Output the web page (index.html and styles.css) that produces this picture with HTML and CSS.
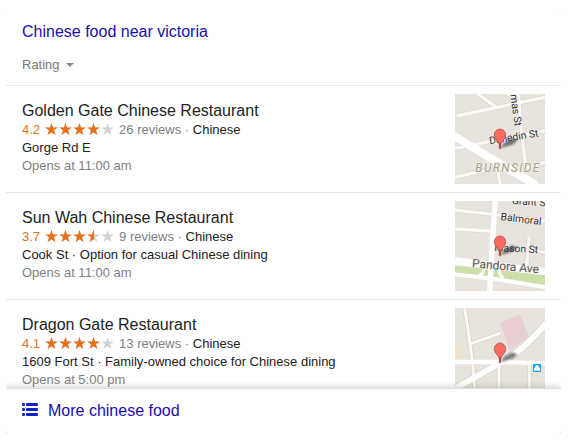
FILE: index.html
```
<!DOCTYPE html>
<html lang="en">
<head>
    <meta charset="UTF-8">
    <meta name="viewport" content="width=device-width, initial-scale=1.0">
    <title>Chinese food near victoria</title>
    <link rel="stylesheet" href="styles.css">
</head>
<body>
    <!-- shared shapes -->
    <svg class="defs" width="0" height="0" aria-hidden="true">
        <defs>
            <path id="star" d="M6.500 0L8 4.400H12.800L9 7.200L10.400 12L6.500 9.200L2.600 12L4 7.200L0.200 4.400H5Z"/>
            <g id="stars">
                <use href="#star"/>
                <use href="#star" x="14"/>
                <use href="#star" x="28"/>
                <use href="#star" x="42"/>
                <use href="#star" x="56"/>
            </g>
            <clipPath id="four"><rect width="55" height="13"/></clipPath>
            <clipPath id="three-half"><rect width="49" height="13"/></clipPath>
            <filter id="soft" x="-50%" y="-50%" width="200%" height="200%"><feGaussianBlur stdDeviation="3"/></filter>
            <g id="pin">
                <path d="M135 162L150 145L172 133L188 140L172 152L150 158Z" fill="#333" opacity=".65" filter="url(#soft)"/>
                <path d="M133 164V151C130 141 118 136 118 122A17 17 0 0 1 152 122C152 136 140 141 137 151V164Z" fill="#fa6c62" stroke="#a8433d" stroke-width="2"/>
                <path d="M135 163V146" stroke="#a8433d" stroke-width="4"/>
            </g>
        </defs>
    </svg>

    <div class="card">
        <div class="header">
            <h2><a href="#">Chinese food near victoria</a></h2>
            <button type="button" class="filter">Rating <span class="arrow"></span></button>
        </div>

        <div class="list">
            <div class="item">
                <div class="info">
                    <h3>Golden Gate Chinese Restaurant</h3>
                    <div class="rating">
                        <span class="score">4.2</span>
                        <svg class="stars" viewBox="0 0 69 14" role="img" aria-label="4.2 stars">
                            <use href="#stars" fill="#d3d3d3"/>
                            <use href="#stars" fill="#e7711b" clip-path="url(#four)"/>
                        </svg>
                        <span>26 reviews · <span class="dark">Chinese</span></span>
                    </div>
                    <p class="dark">Gorge Rd E</p>
                    <p>Opens at 11:00 am</p>
                </div>
                <svg class="map" viewBox="0 0 270 270" aria-hidden="true">
                    <rect width="270" height="270" fill="#e8e4dd"/>
                    <g fill="none" stroke="#d8d3ca" stroke-width="14">
                        <path d="M5 66L270 10M0 163L270 110M0 250L95 228M215 222L270 204M62 -4L122 38M152 -4L198 24M190 -4L199 110L211 210M128 228L136 272"/>
                    </g>
                    <g fill="none" stroke="#faf9f6" stroke-width="10">
                        <path d="M5 66L270 10M0 163L270 110M0 250L95 228M215 222L270 204M62 -4L122 38M152 -4L198 24M190 -4L199 110L211 210M128 228L136 272"/>
                    </g>
                    <path d="M-5 124L125 204L245 274" fill="none" stroke="#fff" stroke-width="24"/>
                    <g class="map-text">
                        <text x="104" y="151" transform="rotate(-9 104 151)">Dunedin St</text>
                        <text x="166" y="2" transform="rotate(82 166 2)">mas St</text>
                        <text class="area" x="61" y="233">BURNSIDE</text>
                    </g>
                    <use href="#pin"/>
                </svg>
            </div>

            <div class="item">
                <div class="info">
                    <h3>Sun Wah Chinese Restaurant</h3>
                    <div class="rating">
                        <span class="score">3.7</span>
                        <svg class="stars" viewBox="0 0 69 14" role="img" aria-label="3.7 stars">
                            <use href="#stars" fill="#d3d3d3"/>
                            <use href="#stars" fill="#e7711b" clip-path="url(#three-half)"/>
                        </svg>
                        <span>9 reviews · <span class="dark">Chinese</span></span>
                    </div>
                    <p class="dark">Cook St · Option for casual Chinese dining</p>
                    <p>Opens at 11:00 am</p>
                </div>
                <svg class="map" viewBox="0 0 270 270" aria-hidden="true">
                    <rect width="270" height="270" fill="#e8e4dd"/>
                    <path d="M0 196L80 202L270 222V253L150 240L0 217Z" fill="#cbdfa9"/>
                    <g fill="none" stroke="#d8d3ca" stroke-width="14">
                        <path d="M0 27L115 40L270 60M0 84L110 90M222 108L215 195M120 138L270 154"/>
                    </g>
                    <g fill="none" stroke="#faf9f6" stroke-width="10">
                        <path d="M0 27L115 40L270 60M0 84L110 90M222 108L215 195M120 138L270 154M88 195Q88 218 72 224M132 200Q132 222 145 232"/>
                    </g>
                    <path d="M0 220L120 234L270 258" fill="none" stroke="#fff" stroke-width="12"/>
                    <path d="M0 180L270 212" fill="none" stroke="#fff" stroke-width="22"/>
                    <path d="M121 -4L112 130L104 274" fill="none" stroke="#fff" stroke-width="16"/>
                    <g class="map-text">
                        <text x="170" y="9" transform="rotate(4 170 9)">Grant St</text>
                        <text x="136" y="57" transform="rotate(7 136 57)">Balmoral</text>
                        <text x="118" y="150" transform="rotate(3 118 150)">Mason St</text>
                        <text class="avenue" x="50" y="199" transform="rotate(5 50 199)">Pandora Ave</text>
                    </g>
                    <use href="#pin"/>
                </svg>
            </div>

            <div class="item">
                <div class="info">
                    <h3>Dragon Gate Restaurant</h3>
                    <div class="rating">
                        <span class="score">4.1</span>
                        <svg class="stars" viewBox="0 0 69 14" role="img" aria-label="4.1 stars">
                            <use href="#stars" fill="#d3d3d3"/>
                            <use href="#stars" fill="#e7711b" clip-path="url(#four)"/>
                        </svg>
                        <span>13 reviews · <span class="dark">Chinese</span></span>
                    </div>
                    <p class="dark">1609 Fort St · Family-owned choice for Chinese dining</p>
                    <p>Opens at 5:00 pm</p>
                </div>
                <svg class="map" viewBox="0 0 270 270" aria-hidden="true">
                    <rect width="270" height="270" fill="#e8e4dd"/>
                    <path d="M0 110L20 116L26 128L20 152H0Z" fill="#f0e2cd"/>
                    <path d="M136 44L196 20L222 88L164 128Z" fill="#e8d0d2"/>
                    <g fill="none" stroke="#d8d3ca" stroke-width="14" stroke-linecap="round">
                        <path d="M28 -6L40 70L52 160L62 270M50 106L134 76M132 165V270M223 168V270"/>
                    </g>
                    <path d="M-5 245L135 165L190 130Q230 95 275 45" fill="none" stroke="#d8d3ca" stroke-width="22"/>
                    <g fill="none" stroke="#faf9f6" stroke-width="9" stroke-linecap="round">
                        <path d="M28 -6L40 70L52 160L62 270M50 106L134 76M132 165V270M223 168V270"/>
                    </g>
                    <path d="M0 162H150L270 166" fill="none" stroke="#fff" stroke-width="13"/>
                    <path d="M-5 245L135 165L190 130Q230 95 275 45" fill="none" stroke="#fff" stroke-width="18"/>
                    <rect x="234" y="168" width="24" height="24" fill="#12a9f0"/>
                    <path d="M237 188V179H240V175H243V171H249V175H252V179H255V188Z" fill="#fff"/>
                    <use href="#pin"/>
                </svg>
            </div>
        </div>

        <div class="footer">
            <a href="#">
                <svg class="list-icon" viewBox="0 0 16 16" fill="#1122cc" aria-hidden="true">
                    <rect width="3" height="3" rx="1"/>
                    <rect x="4" width="12" height="3" rx="1"/>
                    <rect y="5" width="3" height="3" rx="1"/>
                    <rect x="4" y="5" width="12" height="3" rx="1"/>
                    <rect y="10" width="3" height="3" rx="1"/>
                    <rect x="4" y="10" width="12" height="3" rx="1"/>
                </svg>
                More chinese food
            </a>
        </div>
    </div>
</body>
</html>
```
FILE: styles.css
```
body {
    font-family: Arial, "Liberation Sans", sans-serif;
    font-size: 13px;
    line-height: 18px;
    margin: 9px 10px 9px 6px;
    background-color: #fff;
    color: #808080;
}
h2, h3, p {
    margin: 0;
    font-weight: normal;
}
a {
    color: #1a0dab;
    text-decoration: none;
}
a:hover {
    text-decoration: underline;
}
.defs {
    position: absolute;
}
.card {
    background: #fff;
    border-radius: 2px;
    box-shadow: 0 1px 3px rgba(0, 0, 0, 0.3), 0 0 0 1px rgba(0, 0, 0, 0.04);
}
.header {
    padding: 13px 16px 11px;
    border-bottom: 1px solid #e8e8e8;
}
h2 {
    font-size: 16px;
    line-height: 20px;
}
.filter {
    display: flex;
    align-items: center;
    gap: 6px;
    margin-top: 14px;
    padding: 0;
    border: 0;
    background: none;
    font: inherit;
    color: #777;
    cursor: pointer;
}
.arrow {
    border: 4px solid transparent;
    border-top-color: #888;
    border-bottom: 0;
}
/* the last row runs under the footer */
.list {
    max-height: 302px;
    overflow: hidden;
}
.item {
    display: flex;
    justify-content: space-between;
    padding: 8px 16px;
    border-bottom: 1px solid #e8e8e8;
}
.info {
    padding-top: 7px;
}
h3 {
    font-size: 16px;
    line-height: 20px;
    color: #222;
}
.rating {
    display: flex;
    align-items: center;
    gap: 5px;
}
.score {
    color: #e7711b;
}
.dark {
    color: #222;
}
.stars {
    width: 69px;
    height: 14px;
}
.map {
    width: 90px;
    height: 90px;
    flex: none;
}
.map-text {
    font-family: Roboto, sans-serif;
    font-size: 31px;
    fill: #333;
    stroke: #f4f2ee;
    stroke-width: 4px;
    paint-order: stroke;
}
.map-text .avenue {
    font-size: 36px;
    fill: #555;
}
.map-text .area {
    font-size: 36px;
    font-style: italic;
    letter-spacing: 4px;
    fill: #aaa386;
}
.footer {
    position: relative;
    padding: 12px 16px;
    border-top: 1px solid #ddd;
    box-shadow: 0 -2px 6px rgba(0, 0, 0, 0.15);
    clip-path: inset(-8px 0 0);
}
.footer a {
    display: flex;
    align-items: center;
    gap: 10px;
    font-size: 16px;
    line-height: 20px;
}
.list-icon {
    width: 16px;
    height: 16px;
}
```
